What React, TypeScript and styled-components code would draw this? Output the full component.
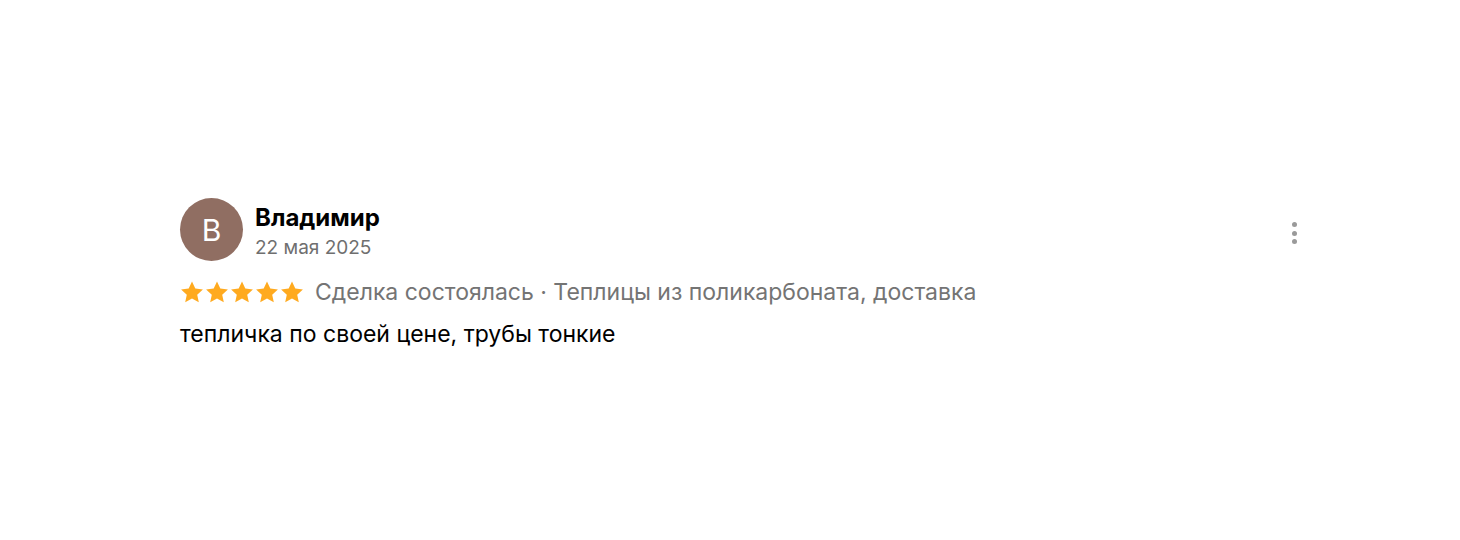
import React from "react";
import styled, { createGlobalStyle } from "styled-components";

const Global = createGlobalStyle`
  html, body { margin: 0; padding: 0; background: #ffffff; }
  body { font-family: Inter, "Noto Sans", Roboto, sans-serif; -webkit-font-smoothing: antialiased; }
`;

const Page = styled.div`
  width: 1460px;
  height: 540px;
  box-sizing: border-box;
  padding: 198px 160px 0 180px;
`;

const Review = styled.article`
  display: flex;
  flex-direction: column;
`;

const Header = styled.header`
  display: flex;
  align-items: flex-start;
  gap: 12px;
`;

const Avatar = styled.div`
  width: 63px;
  height: 63px;
  border-radius: 50%;
  background: #906e62;
  color: #ffffff;
  display: flex;
  align-items: center;
  justify-content: center;
  font-size: 30px;
  font-weight: 400;
  flex-shrink: 0;
`;

const Author = styled.div`
  display: flex;
  flex-direction: column;
  padding-top: 6px;
  flex: 1;
`;

const Name = styled.div`
  font-size: 24px;
  font-weight: 700;
  line-height: 28px;
  color: #000000;
`;

const DateText = styled.div`
  margin-top: 4px;
  font-size: 19px;
  line-height: 24px;
  color: #6f6f6f;
`;

const MenuButton = styled.button`
  border: none;
  background: none;
  padding: 0;
  margin-top: 24px;
  width: 12px;
  height: 22px;
  display: flex;
  flex-direction: column;
  align-items: center;
  justify-content: space-between;
  cursor: pointer;
`;

const Dot = styled.span`
  width: 5px;
  height: 5px;
  border-radius: 50%;
  background: #9a9a9a;
`;

const MetaRow = styled.div`
  display: flex;
  align-items: center;
  gap: 11px;
  margin-top: 17px;
`;

const Stars = styled.div`
  display: flex;
  gap: 1px;
`;

const Meta = styled.span`
  font-size: 23px;
  line-height: 28px;
  color: #747474;
`;

const Body = styled.p`
  margin: 14px 0 0;
  font-size: 23px;
  line-height: 28px;
  color: #000000;
`;

const Star = () => (
  <svg width="24" height="22" viewBox="0 0 24 22">
    <path
      d="M12 0.6l3.3 7 7.6 0.9-5.7 5.2 1.6 7.6L12 17.5l-6.8 3.8 1.6-7.6L1.1 8.5l7.6-0.9z"
      fill="#ffaa1f"
    />
  </svg>
);

export default function App() {
  return (
    <>
      <Global />
      <Page>
        <Review>
          <Header>
            <Avatar>В</Avatar>
            <Author>
              <Name>Владимир</Name>
              <DateText>22 мая 2025</DateText>
            </Author>
            <MenuButton aria-label="Ещё">
              <Dot />
              <Dot />
              <Dot />
            </MenuButton>
          </Header>
          <MetaRow>
            <Stars>
              {[0, 1, 2, 3, 4].map((i) => (
                <Star key={i} />
              ))}
            </Stars>
            <Meta>Сделка состоялась · Теплицы из поликарбоната, доставка</Meta>
          </MetaRow>
          <Body>тепличка по своей цене, трубы тонкие</Body>
        </Review>
      </Page>
    </>
  );
}
